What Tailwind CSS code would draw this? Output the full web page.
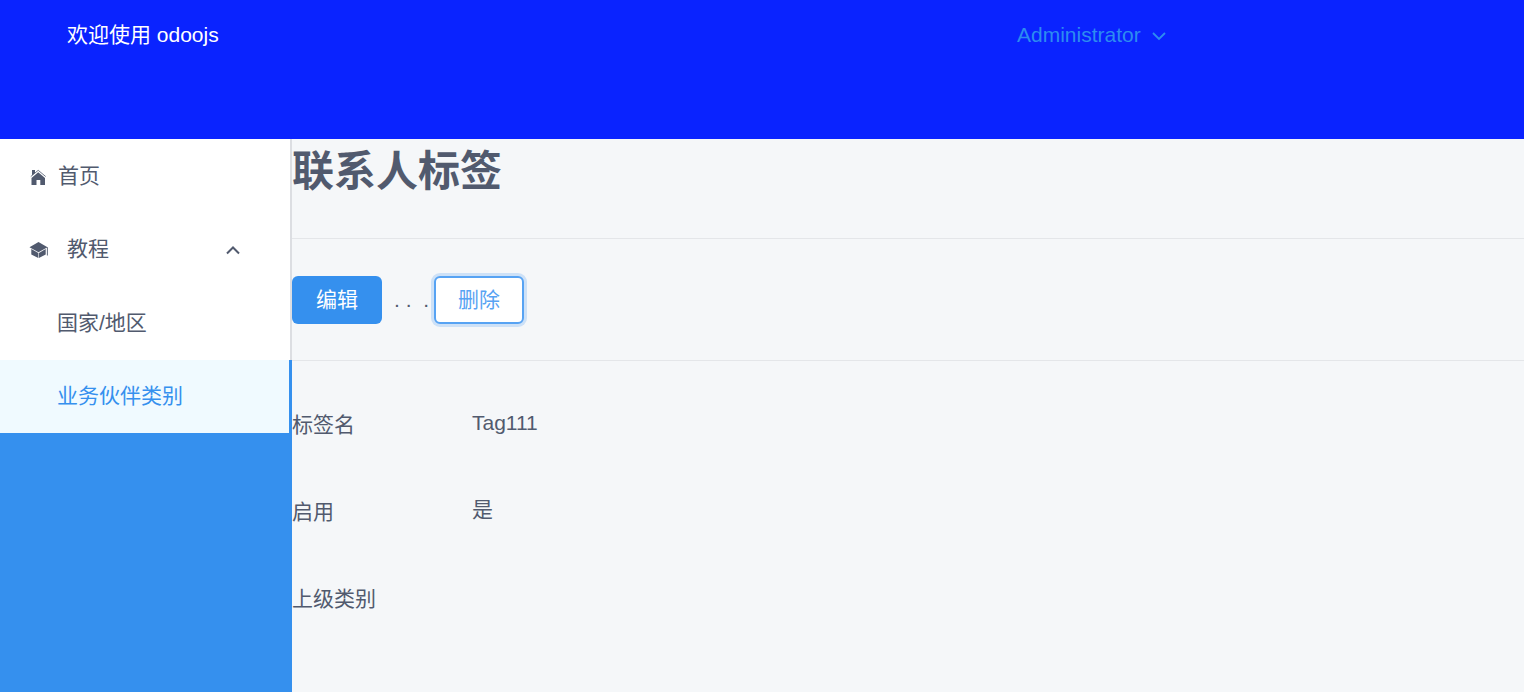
<!DOCTYPE html>
<html lang="zh-CN">
<head>
<meta charset="utf-8">
<meta name="viewport" content="width=device-width, initial-scale=1">
<title>odoojs</title>
<script src="https://cdn.jsdelivr.net/npm/@tailwindcss/browser@4"></script>
</head>
<body class="flex min-h-screen flex-col bg-[#f5f7f9] font-['Liberation_Sans','Noto_Sans_CJK_SC',sans-serif] text-[21px] leading-8 text-[#515a6e]">
<header class="grid h-[139px] shrink-0 grid-cols-3 items-start bg-[#0a23ff] pt-[19px]">
  <div class="col-span-2 pl-[67px] text-white">欢迎使用 odoojs</div>
  <div>
    <button type="button" class="flex cursor-pointer items-center gap-2.5 pl-px text-[#2d8cf0]">
      <span>Administrator</span>
      <svg class="mt-0.5 size-4" viewBox="0 0 16 16" fill="none" stroke="currentColor" stroke-width="1.8"><path d="M2 5L8 11L14 5"/></svg>
    </button>
  </div>
</header>
<div class="flex grow">
  <aside class="w-[292px] shrink-0 bg-[#3590ee]">
    <nav>
      <ul class="grid h-[294px] grid-rows-4 bg-white">
        <li><a href="#" class="flex h-full items-center gap-3 border-r-2 border-[#dcdee2] pl-[30px]">
          <svg class="mt-0.5 size-4" viewBox="0 0 16 16" fill="currentColor"><path d="M2 1h3v3L2 6.500zM8.200 3.300L15 9V16H10.300v-5H6.500V16H1.500V9z"/><path d="M.8 7.500L8.200 1.300L15.700 7.500" fill="none" stroke="currentColor" stroke-width=".8"/></svg>
          <span>首页</span></a></li>
        <li><button type="button" aria-expanded="true" class="flex h-full w-full cursor-pointer items-center border-r-2 border-[#dcdee2] pr-[49px] pl-[29px]">
          <svg class="mt-0.5 size-5" viewBox="0 0 20 20" fill="currentColor"><path d="M9.500 2L18.500 7.200L9.500 12.200L.5 7.200zM2.300 9L9.300 13V18L2.300 14.500zM9.900 13L16.700 9V14.500L9.900 18zM17.900 7.200h.9V15.500h-.9z"/></svg>
          <span class="ml-[18px] grow text-left">教程</span>
          <svg class="mt-1 size-4" viewBox="0 0 16 16" fill="none" stroke="currentColor" stroke-width="2"><path d="M2 10.500L8 4.500L14 10.500"/></svg>
        </button></li>
        <li><a href="#" class="flex h-full items-center border-r-2 border-[#dcdee2] pl-[57px]">国家/地区</a></li>
        <li><a href="#" aria-current="page" class="flex h-full items-center border-r-3 border-[#3590ee] bg-[#f0faff] pl-[57px] text-[#3590ee]">业务伙伴类别</a></li>
      </ul>
    </nav>
  </aside>
  <main class="min-w-0 grow">
    <h1 class="h-[99px] text-[42px] leading-[66px] font-bold">联系人标签</h1>
    <hr class="border-t border-[#e4e6e9]">
    <div class="flex h-[121px] items-center">
      <button type="button" class="h-12 w-[90px] cursor-pointer rounded-md bg-[#3590ee] text-white">编辑</button>
      <span class="ml-3 whitespace-pre">. .  .</span>
      <button type="button" class="ml-[5px] h-12 w-[90px] cursor-pointer rounded-md border-2 border-[#57a3f3] bg-white text-[#57a3f3] ring-3 ring-[#2d8cf0]/20">删除</button>
    </div>
    <hr class="border-t border-[#e4e6e9]">
    <dl class="grid grid-cols-[180px_1fr] auto-rows-[87px] pt-[46px]">
      <dt class="pt-[2px]">标签名</dt><dd>Tag111</dd>
      <dt class="pt-[2px]">启用</dt><dd>是</dd>
      <dt class="pt-[2px]">上级类别</dt><dd></dd>
    </dl>
  </main>
</div>
</body>
</html>
